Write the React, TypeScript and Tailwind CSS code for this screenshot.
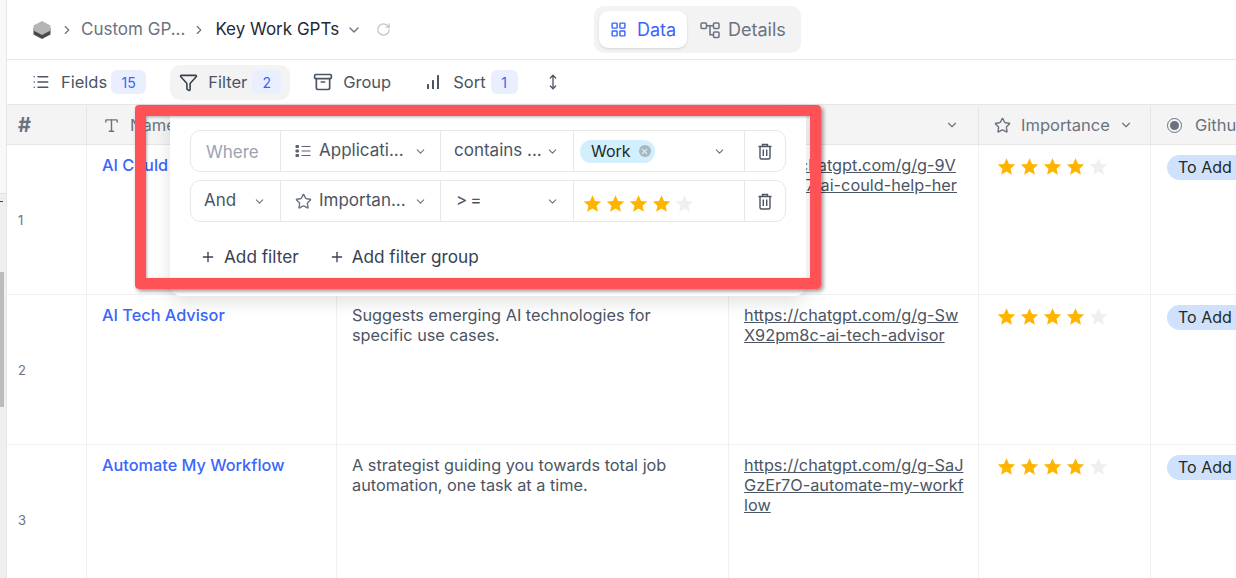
import { ChevronDown, ChevronRight, RotateCw, LayoutGrid, List, Filter, Archive, MoveVertical, Star, Plus, Type, X } from "lucide-react";

const font = "font-['Inter','Noto_Sans',sans-serif]";

function Stars({ size = 19 }: { size?: number }) {
  return (
    <div className="flex items-center gap-[4px]">
      {[0, 1, 2, 3, 4].map((i) => (
        <svg key={i} width={size} height={size} viewBox="0 0 24 24" className={i < 4 ? "text-[#ffb400]" : "text-[#efefef]"}>
          <path fill="currentColor" d="M12 1.5l3.2 7.2 7.8.8-5.9 5.2 1.7 7.8L12 18.4l-6.8 4.1 1.7-7.8L1 9.5l7.8-.8z" />
        </svg>
      ))}
    </div>
  );
}

function Count({ n, className }: { n: number; className: string }) {
  return <span className={`flex h-6 items-center justify-center rounded-md bg-[#e9efff] text-[14px] text-[#3b64f6] ${className}`}>{n}</span>;
}

function HeadCell({ className, children }: { className: string; children?: React.ReactNode }) {
  return <div className={`flex h-full shrink-0 items-center border-r border-[#e6e6e6] ${className}`}>{children}</div>;
}

function DetailsIcon() {
  return (
    <svg width="20" height="18" viewBox="0 0 20 18" fill="none" stroke="currentColor" strokeWidth="1.5">
      <rect x="1" y="2" width="5.500" height="5.500" rx="1" />
      <rect x="13.500" y="2" width="5.500" height="5.500" rx="1" />
      <rect x="13.500" y="11" width="5.500" height="5.500" rx="1" />
      <path d="M6.500 4.700h7M10 4.700v9h3.500" />
    </svg>
  );
}

function BinIcon() {
  return (
    <svg width="16" height="17" viewBox="0 0 16 17" fill="none" stroke="currentColor" strokeWidth="1.4">
      <path d="M1.500 3.500h13M5.500 3.500V1.500h5v2M3 3.500v11a1.500 1.500 0 0 0 1.500 1.500h7a1.500 1.500 0 0 0 1.500-1.500v-11M6.300 6.500v6.500M9.700 6.500v6.500" />
    </svg>
  );
}

function OptionsIcon() {
  return (
    <svg width="16" height="14" viewBox="0 0 16 14" className="text-[#5b6472]">
      <rect x="0.500" y="1" width="3.500" height="3" rx="0.800" fill="currentColor" />
      <rect x="0.500" y="5.500" width="3.500" height="3" rx="0.800" fill="currentColor" />
      <rect x="0.500" y="10" width="3.500" height="3" rx="0.800" fill="currentColor" />
      <path d="M6.500 2.500H15.500M6.500 7H15.500M6.500 11.500H15.500" stroke="currentColor" strokeWidth="1.200" />
    </svg>
  );
}

function SortBars() {
  return (
    <svg width="16" height="16" viewBox="0 0 16 16" fill="currentColor">
      <rect x="2" y="10" width="2" height="5" rx="0.500" />
      <rect x="7" y="6" width="2" height="9" rx="0.500" />
      <rect x="12" y="1" width="2" height="14" rx="0.500" />
    </svg>
  );
}

const rows = [
  { n: 1, name: "AI Could", desc: "", url: "https://chatgpt.com/g/g-9V\nTy84oQ7/ai-could-help-her" },
  { n: 2, name: "AI Tech Advisor", desc: "Suggests emerging AI technologies for specific use cases.", url: "https://chatgpt.com/g/g-Sw\nX92pm8c-ai-tech-advisor" },
  { n: 3, name: "Automate My Workflow", desc: "A strategist guiding you towards total job automation, one task at a time.", url: "https://chatgpt.com/g/g-SaJ\nGzEr7O-automate-my-workf\nlow" },
];

function FilterRow({ first }: { first: boolean }) {
  return (
    <div className="flex h-[42px] items-center rounded-[10px] border border-[#e8e8e8] text-[17px] text-[#4b5563]">
      <div className="flex h-full w-[90px] items-center justify-between border-r border-[#e8e8e8] px-[13px]">
        {first ? (
          <span className="pl-[2px] pt-[3px] text-[#9ca3af]">Where</span>
        ) : (
          <>
            <span>And</span>
            <ChevronDown size={13} className="mr-[1px] text-[#6b7280]" />
          </>
        )}
      </div>
      <div className="flex h-full w-[160px] items-center border-r border-[#e8e8e8] pl-[14px]">
        {first ? <OptionsIcon /> : <Star size={17} className="text-[#6b7280]" />}
        <span className={`w-[90px] ${first ? "ml-[8px]" : "ml-[7px]"}`}>{first ? "Applicati..." : "Importan..."}</span>
        <ChevronDown size={13} className="ml-[5px] text-[#6b7280]" />
      </div>
      <div className="flex h-full w-[133px] items-center justify-between border-r border-[#e8e8e8] px-[13px]">
        <span className={first ? "" : "pl-[2px] tracking-[3px]"}>{first ? "contains ..." : ">="}</span>
        <ChevronDown size={13} className="mr-[1px] text-[#6b7280]" />
      </div>
      <div className="flex h-full w-[171px] items-center justify-between border-r border-[#e8e8e8] pl-[6px] pr-[18px]">
        {first ? (
          <span className="flex h-[23px] items-center gap-[8px] rounded-full bg-[#d1effc] pl-[11px] pr-[4px] text-[16px] text-[#1f2a1f]">
            Work
            <span className="flex h-3 w-3 items-center justify-center rounded-full bg-[#a9b6bc]">
              <X size={9} strokeWidth={3} className="text-[#d1effc]" />
            </span>
          </span>
        ) : (
          <div className="pl-[3px] pt-[4px]">
            <Stars />
          </div>
        )}
        {first && <ChevronDown size={13} className="text-[#6b7280]" />}
      </div>
      <div className="flex flex-1 items-center justify-center text-[#4b5563]">
        <BinIcon />
      </div>
    </div>
  );
}

export default function App() {
  return (
    <div className={`relative flex h-[578px] w-[1236px] overflow-hidden bg-white text-[16.5px] ${font}`}>
      <div className="flex w-[7px] shrink-0 flex-col border-r border-[#e6e6e6] bg-[#f8f8f8]">
        <div className="h-[194px] border-b border-[#e2e2e2]" />
        <div className="h-[213px] bg-[#efefef]">
          <div className="mt-[7px] h-[1px] w-[3px] bg-[#444]" />
          <div className="mt-[70px] h-[135px] w-[4px] bg-[#bcbcbc]" />
        </div>
        <div className="flex-1 bg-[#efefef]" />
      </div>

      <div className="min-w-0 flex-1">
        <div className="flex h-[60px] items-center border-b border-[#e6e6e6]">
          <div className="flex w-[587px] items-center pl-[26px] text-[17px]">
            <svg width="18" height="20" viewBox="0 0 18 20" className="shrink-0">
              <path fill="#4a4a4a" d="M0.5 8v6.5L9 19l8.5-4.5V8z" />
              <path fill="#b5b5b5" d="M9 1l8.5 4.5v5L9 15 .5 10.500v-5z" />
            </svg>
            <ChevronRight size={14} className="ml-[9px] text-[#6b7280]" />
            <span className="ml-[7px] text-[#6b7280]">Custom GP...</span>
            <ChevronRight size={14} className="ml-[7px] text-[#6b7280]" />
            <span className="ml-[9px] text-[#1f2937]">Key Work GPTs</span>
            <ChevronDown size={16} className="ml-[7px] text-[#6b7280]" />
            <RotateCw size={15} className="ml-[14px] text-[#c0c4ca]" />
          </div>
          <div className="flex h-[47px] w-[207px] items-center rounded-[10px] bg-[#f3f3f3] p-[5px] text-[18px]">
            <div className="flex h-[37px] w-[88px] items-center justify-center gap-[10px] rounded-[9px] bg-white text-[#3b64f6] shadow-sm">
              <LayoutGrid size={17} />
              Data
            </div>
            <div className="flex items-center gap-[8px] pl-[13px] text-[#6b7280]">
              <DetailsIcon />
              Details
            </div>
          </div>
        </div>

        <div className="flex h-[45px] items-center border-b border-[#e6e6e6] text-[#4b5563]">
          <div className="ml-[25px] flex items-center">
            <List size={18} />
            <span className="ml-[11px]">Fields</span>
            <span className="ml-[4px]"><Count n={15} className="w-[35px]" /></span>
          </div>
          <div className="ml-[24px] flex h-[35px] w-[120px] items-center rounded-[10px] bg-[#f3f3f3] pl-[9px]">
            <Filter size={19} className="text-[#374151]" />
            <span className="ml-[10px]">Filter</span>
            <span className="ml-[5px]"><Count n={2} className="w-[29px]" /></span>
          </div>
          <div className="ml-[23px] flex items-center">
            <Archive size={20} />
            <span className="ml-[10px]">Group</span>
          </div>
          <div className="ml-[34px] flex items-center">
            <SortBars />
            <span className="ml-[12px]">Sort</span>
            <span className="ml-[5px]"><Count n={1} className="w-[27px]" /></span>
          </div>
          <MoveVertical size={16} className="ml-[27px]" />
        </div>

        <div className="flex h-[40px] items-center border-b border-[#e6e6e6] bg-[#f4f4f4] pt-[1px] text-[#6b7280]">
          <HeadCell className="w-[80px] pl-[11px] text-[20px] font-bold">#</HeadCell>
          <HeadCell className="w-[250px] pl-[16px]">
            <Type size={17} />
            <span className="ml-[10px]">Name</span>
          </HeadCell>
          <HeadCell className="w-[392px]" />
          <HeadCell className="w-[250px] justify-end pr-[19px]"><ChevronDown size={14} /></HeadCell>
          <HeadCell className="w-[172px] pl-[15px]">
            <Star size={17} />
            <span className="ml-[10px]">Importance</span>
            <ChevronDown size={14} className="ml-[9px]" />
          </HeadCell>
          <div className="flex items-center pl-[16px]">
            <span className="flex h-[15px] w-[15px] items-center justify-center rounded-full border-[1.5px] border-[#6b7280]">
              <span className="h-[9px] w-[9px] rounded-full bg-[#6b7280]" />
            </span>
            <span className="ml-[13px]">Github</span>
          </div>
        </div>

        {rows.map((r) => (
          <div key={r.n} className="flex h-[150px] border-b border-[#f0f0f0] text-[#4b5563]">
            <div className="flex w-[80px] shrink-0 items-center border-r border-[#f0f0f0] pl-[11px] pt-[3px] text-[13px] text-[#6b7280]">{r.n}</div>
            <div className="w-[250px] shrink-0 whitespace-nowrap border-r border-[#f0f0f0] pl-[15px] pt-[8px] text-[16.3px] font-[450] text-[#3b66fa]">{r.name}</div>
            <div className="w-[392px] shrink-0 border-r border-[#f0f0f0] pl-[15px] pr-[50px] pt-[10px] text-[16.3px] leading-[20px]">{r.desc}</div>
            <div className="w-[250px] shrink-0 whitespace-pre-line border-r border-[#f0f0f0] pl-[15px] pt-[10px] text-[16.3px] leading-[20px] underline">{r.url}</div>
            <div className="w-[172px] shrink-0 border-r border-[#f0f0f0] pl-[18px] pt-[12px]"><Stars /></div>
            <div className="pl-[16px] pt-[10px]">
              <span className="flex h-[25px] w-[90px] items-center rounded-full bg-[#d0e1fd] pb-[1px] pl-[11px] text-[16px] text-[#1f2a1f]">To Add</span>
            </div>
          </div>
        ))}
      </div>

      {/* filter popover */}
      <div className="absolute left-[170px] top-[110px] h-[186px] w-[636px] rounded-b-[12px] bg-white px-[20px] pt-[20px] shadow-[0_6px_18px_rgba(0,0,0,0.12)]">
        <div className="flex flex-col gap-[8px]">
          <FilterRow first />
          <FilterRow first={false} />
        </div>
        <div className="mt-[22px] flex items-center pl-[10px] text-[17.2px] text-[#374151]">
          <Plus size={16} />
          <span className="ml-[8px]">Add filter</span>
          <Plus size={16} className="ml-[30px]" />
          <span className="ml-[7px]">Add filter group</span>
        </div>
      </div>

      {/* red annotation frame from the screenshot */}
      <div className="absolute left-[135px] top-[105px] h-[184px] w-[686px] rounded-[4px] border-[11px] border-[#ff5257] shadow-[2px_2px_4px_rgba(0,0,0,0.45),inset_1px_1px_3px_rgba(0,0,0,0.3)]" />
    </div>
  );
}
